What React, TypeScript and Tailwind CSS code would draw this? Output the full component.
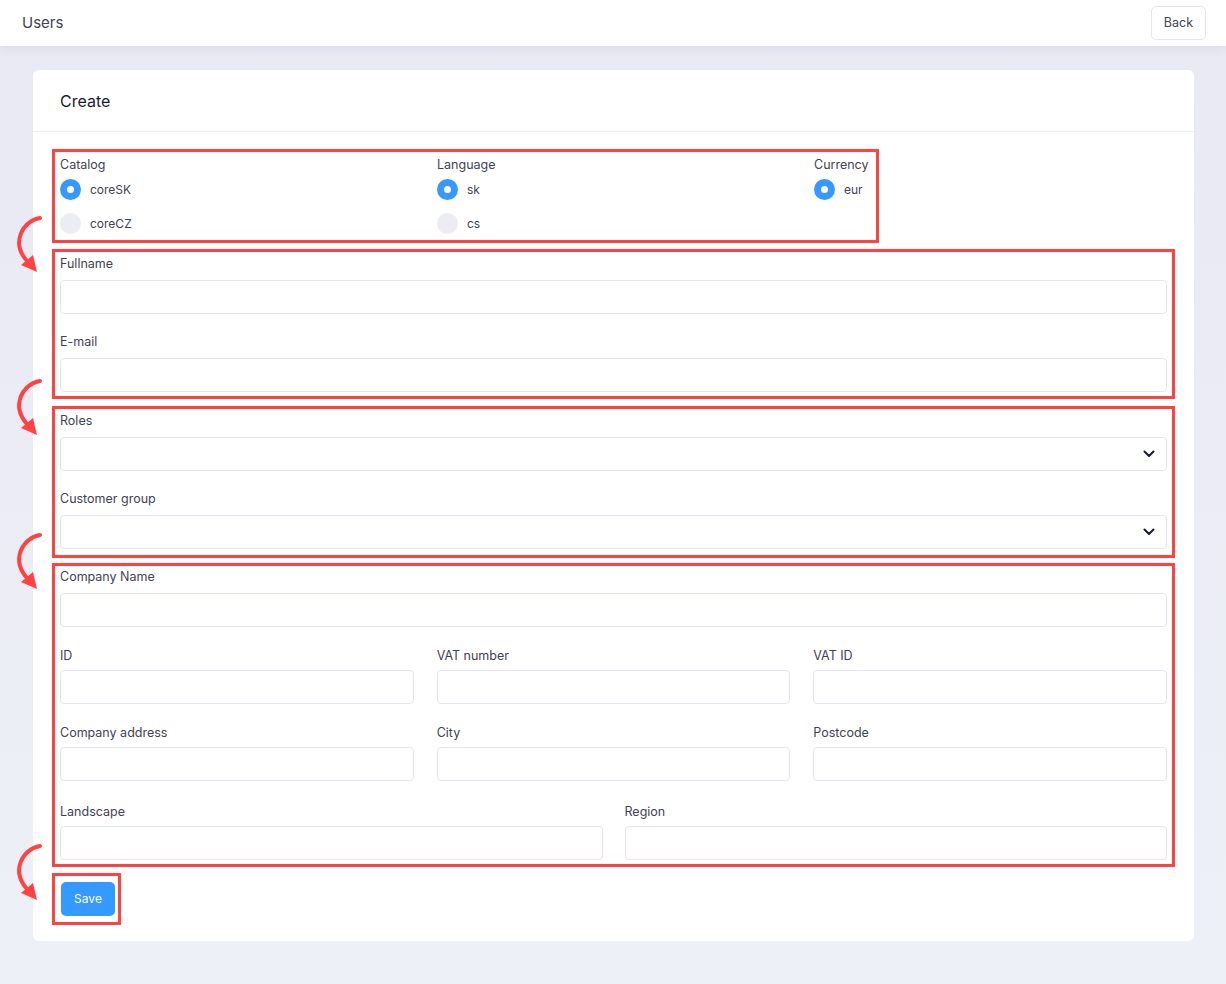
import React from "react";

const font = { fontFamily: "Inter, 'Open Sans', sans-serif" };

function Arrow({ top }: { top: number }) {
  return (
    <svg className="pointer-events-none absolute left-0" style={{ top }} width="44" height="62" viewBox="0 0 44 62">
      <path d="M40 5 C 22 8, 11 30, 27 48" fill="none" stroke="#ff4343" strokeWidth="4" strokeLinecap="round" />
      <polygon points="37,59 21,52 33,42" fill="#ff4343" />
    </svg>
  );
}

function Label({ children }: { children: React.ReactNode }) {
  return <div className="h-4 text-[12.5px] leading-4 text-[#3f4254]">{children}</div>;
}

function Input({ tight }: { tight?: boolean }) {
  return <div className={tight ? "mt-[6px] h-[34px] rounded-[4px] border border-[#e4e6ef] bg-white" : "mt-2 h-[34px] rounded-[4px] border border-[#e4e6ef] bg-white"} />;
}

function Select() {
  return (
    <div className="mt-2 flex h-[34px] items-center justify-end rounded-[4px] border border-[#e4e6ef] bg-white pr-[11px]">
      <svg width="12" height="8" viewBox="0 0 12 8">
        <path d="M1.5 1.5 L6 6 L10.5 1.5" fill="none" stroke="#181c32" strokeWidth="2" strokeLinecap="round" strokeLinejoin="round" />
      </svg>
    </div>
  );
}

function Radio({ label, checked }: { label: string; checked?: boolean }) {
  return (
    <div className="flex h-[21px] items-center gap-[9px]">
      {checked ? (
        <span className="flex h-[21px] w-[21px] items-center justify-center rounded-full bg-[#3699ff]">
          <span className="h-[7px] w-[7px] rounded-full bg-white" />
        </span>
      ) : (
        <span className="h-[21px] w-[21px] rounded-full bg-[#ebedf3]" />
      )}
      <span className="text-[12px] text-[#3f4254]">{label}</span>
    </div>
  );
}

export default function App() {
  return (
    <div className="relative min-h-[984px] bg-gradient-to-b from-[#e8e9f3] to-[#eef0f7]" style={font}>
      <header className="flex h-[46px] items-center justify-between bg-white pl-[22px] pr-5 shadow-[0_2px_10px_rgba(82,63,105,0.08)]">
        <span className="text-[15px] text-[#3f4254]">Users</span>
        <button className="h-[34px] rounded-[5px] border border-[#e4e6ef] px-3 text-[12.5px] text-[#3f4254]">Back</button>
      </header>

      <main className="pl-[33px] pr-8 pt-6">
        <div className="rounded-[6px] bg-white pb-4">
          <div className="flex h-[62px] items-center border-b border-[#eff2f5] px-[27px]">
            <h2 className="text-[16px] text-[#181c32]">Create</h2>
          </div>

          <div className="px-[19px] pt-[17px]">
            <div className="w-[827px] border-[3px] border-[#ff4343] px-[5px] pb-[6px] pt-[5px]">
              <div className="grid grid-cols-[377px_377px_1fr]">
                <div>
                  <Label>Catalog</Label>
                  <div className="mt-[6px] flex flex-col gap-[13px]">
                    <Radio label="coreSK" checked />
                    <Radio label="coreCZ" />
                  </div>
                </div>
                <div>
                  <Label>Language</Label>
                  <div className="mt-[6px] flex flex-col gap-[13px]">
                    <Radio label="sk" checked />
                    <Radio label="cs" />
                  </div>
                </div>
                <div>
                  <Label>Currency</Label>
                  <div className="mt-[6px] flex flex-col gap-[13px]">
                    <Radio label="eur" checked />
                  </div>
                </div>
              </div>
            </div>

            <div className="mt-[6px] border-[3px] border-[#ff4343] px-[5px] pb-[4px] pt-[4px]">
              <Label>Fullname</Label>
              <Input />
              <div className="mt-5">
                <Label>E-mail</Label>
                <Input />
              </div>
            </div>

            <div className="mt-[7px] border-[3px] border-[#ff4343] px-[5px] pb-[6px] pt-[4px]">
              <Label>Roles</Label>
              <Select />
              <div className="mt-[20px]">
                <Label>Customer group</Label>
                <Select />
              </div>
            </div>

            <div className="mt-[5px] border-[3px] border-[#ff4343] px-[5px] pb-[4px] pt-[3px]">
              <Label>Company Name</Label>
              <Input />
              <div className="mt-[21px] grid grid-cols-3 gap-x-[23px] gap-y-[21px]">
                <div>
                  <Label>ID</Label>
                  <Input tight />
                </div>
                <div>
                  <Label>VAT number</Label>
                  <Input tight />
                </div>
                <div>
                  <Label>VAT ID</Label>
                  <Input tight />
                </div>
                <div>
                  <Label>Company address</Label>
                  <Input tight />
                </div>
                <div>
                  <Label>City</Label>
                  <Input tight />
                </div>
                <div>
                  <Label>Postcode</Label>
                  <Input tight />
                </div>
              </div>
              <div className="mt-[23px] grid grid-cols-2 gap-x-[22px]">
                <div>
                  <Label>Landscape</Label>
                  <Input tight />
                </div>
                <div>
                  <Label>Region</Label>
                  <Input tight />
                </div>
              </div>
            </div>

            <div className="mt-[6px] inline-block border-[3px] border-[#ff4343] py-[6px] pl-[6px] pr-[3px]">
              <button className="h-[34px] w-[54px] rounded-[5px] bg-[#3699ff] text-[12px] text-white">Save</button>
            </div>
          </div>
        </div>
      </main>

      <Arrow top={213} />
      <Arrow top={376} />
      <Arrow top={530} />
      <Arrow top={841} />
    </div>
  );
}
